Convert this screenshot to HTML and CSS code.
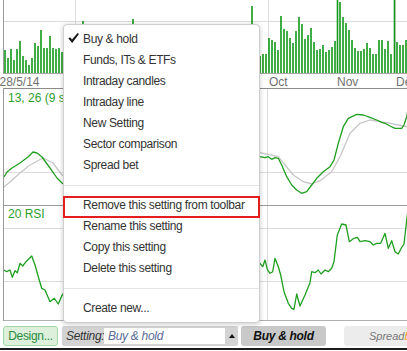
FILE: index.html
```html
<!DOCTYPE html>
<html>
<head>
<meta charset="utf-8">
<title>Chart settings</title>
<link rel="stylesheet" href="styles.css">
</head>
<body>
<div class="app">
  <div class="chart">
    <div class="panel vol">
      <svg class="plot" width="403" height="73" viewBox="4 0 403 73">
        <path class="grid" d="M4 21.5H407M75.5 0V73M268.5 0V73M337.5 0V73M395.5 0V73"/>
        <path class="bars" d="M5 73V50M8 73V58M11 73V49M14 73V60M17 73V49M20 73V41M23 73V56M26 73V60M29 73V65M32 73V58M35 73V43M38 73V46M41 73V30M44 73V48M47 73V48M50 73V36M53 73V48M56 73V49M59 73V48M62 73V52M83 73V21M133 73V19M252 73V6M260 73V56M263 73V54M266 73V54M269 73V38M272 73V40M275 73V42M278 73V50M281 73V16M284 73V29M287 73V31M290 73V38M293 73V43M296 73V31M299 73V17M302 73V24M305 73V39M308 73V35M311 73V28M314 73V42M317 73V50M320 73V49M323 73V45M326 73V52M329 73V50M332 73V47M335 73V41M337.5 73V0M340 73V2M343 73V17M346 73V23M349 73V30M352 73V40M355 73V48M358 73V51M361 73V51M364 73V49M367 73V43M370 73V48M373 73V54M376 73V54M379 73V40M382 73V40M385 73V49M388 73V41M391 73V54M394.5 73V0M397 73V42M400 73V45M403 73V45M406 73V40"/>
      </svg>
    </div>
    <div class="axis">
      <svg width="407" height="14" viewBox="0 74 407 14">
        <text x="-0.5" y="86">28/5/14</text>
        <text x="269" y="86">Oct</text>
        <text x="337" y="86">Nov</text>
        <text x="396" y="86">Dec</text>
      </svg>
    </div>
    <div class="panel macd">
      <span class="label">13, 26 (9 signal)</span>
      <svg class="plot" width="403" height="116" viewBox="4 89 403 116">
        <path class="grid" d="M4 172.5H407M267.5 89V205"/>
        <path class="sig" d="M4 187L10 182L20 173L30 165L43 158L53 163L62 175L70 180L258 152L260 152.7L278.3 156.7L285 165L293.3 175L303.3 181.7L311.7 184L320 180.7L331.7 171.7L340 156.7L350 133.3L360 123.3L370 120L386.7 122.7L403.3 126L408 127"/>
        <path class="line" d="M4 177L7 172L12 168L20 163L28 157L33 152L37 153L42 157L50 168L57 178L62 183L66 186L258 156L260 156.7L265 157.7L268.3 156.7L271.7 159.3L275 157.7L278.3 158.3L281.7 165L286.7 176.7L291.7 185L296.7 190L301.7 193.3L306.7 191.7L311.7 185L316.7 178.3L323.3 171.7L330 166.7L334 160L338.3 143.3L343.3 126.7L348.3 118.3L356.7 114.3L363.3 115L370 117.3L376.7 120L381.7 122.3L385 123.3L390 126L395 128.3L401.7 128.3L404 125L406.7 116.7L408 110"/>
      </svg>
    </div>
    <div class="panel rsi">
      <span class="label">20 RSI</span>
      <svg class="plot" width="403" height="114" viewBox="4 206 403 114">
        <path class="grid" d="M4 228.5H407M4 281.5H407M267.5 206V320"/>
        <path class="line" d="M4 270L6.7 271.7L10 270L12.3 277.3L15 270.7L17.3 272.7L20 263.3L22.7 266L26 261.7L31.7 256L35 265L38.3 276.7L41.7 288.3L45 290L50 301.7L54.3 298.3L58.3 304L61.7 296L66 290L258 262L260 263.3L262.7 266.7L265 260L267.3 269.3L270 273.3L272.7 271.7L275 258.3L278.3 266.7L280.7 275L284 291.7L288.3 303.3L291.7 308.3L294 309.3L296.7 294L300 306L305 295L310 282.7L311.7 271.7L315 272.7L318.3 270L321 274L325 270L328.3 271.7L331.7 268.3L334 261.7L337.3 235L341.7 224L346 225L349.3 241.7L354 238.3L357.3 237.3L360 241.7L365 240.7L370 241.7L373.3 245L376.7 243.3L380.7 243.3L385 233.3L388.3 248.3L391.7 240.7L395 251.7L398.3 254L401.7 247.3L404 244L406.7 220L408 210"/>
      </svg>
    </div>
  </div>

  <div class="toolbar">
    <div class="btn design">Design...</div>
    <div class="setting">
      <span class="setting-label">Setting:</span>
      <span class="setting-input">Buy &amp; hold</span>
      <svg class="caret" width="6" height="4" viewBox="0 0 6 4"><path d="M0 4L3 0L6 4Z"/></svg>
    </div>
    <div class="btn buy">Buy &amp; hold</div>
    <div class="btn spread">Spread <span class="hot">b</span></div>
  </div>
  <div class="base"></div>

  <div class="menu">
    <div class="item"><svg class="check" width="11" height="10" viewBox="0 0 11 10"><path d="M0.3 5.6L2.1 4.2L4 6.4L9.6 0L11 1.1L4.2 10Z"/></svg>Buy &amp; hold</div>
    <div class="item">Funds, ITs &amp; ETFs</div>
    <div class="item">Intraday candles</div>
    <div class="item">Intraday line</div>
    <div class="item">New Setting</div>
    <div class="item">Sector comparison</div>
    <div class="item">Spread bet</div>
    <div class="sep"></div>
    <div class="item marked">Remove this setting from toolbar</div>
    <div class="item">Rename this setting</div>
    <div class="item">Copy this setting</div>
    <div class="item">Delete this setting</div>
    <div class="sep"></div>
    <div class="item">Create new...</div>
  </div>
</div>
</body>
</html>
```

FILE: styles.css
```css
* { box-sizing: border-box; }
html, body { margin: 0; padding: 0; }
body {
  width: 407px;
  height: 351px;
  overflow: hidden;
  background: #fff;
  font-family: "Liberation Sans", Arial, sans-serif;
  font-size: 12px;
  color: #333;
}
.app { position: relative; width: 407px; height: 351px; }

.chart { width: 407px; }
.panel {
  position: relative;
  margin-left: 3px;
  border-left: 1px solid #9a9a9a;
  overflow: hidden;
}
.panel svg, .axis svg { display: block; }
.vol { height: 74px; border-bottom: 1px solid #a8a8a8; }
.axis { height: 14px; }
.axis text { font-family: "Liberation Sans", Arial, sans-serif; font-size: 12px; fill: #707070; }
.macd { height: 118px; border-top: 1px solid #8c8c8c; border-bottom: 1px solid #9a9a9a; }
.rsi { height: 115px; border-bottom: 1px solid #b0b0b0; }

.grid { stroke: #dcdcdc; stroke-width: 1; fill: none; }
.bars { stroke: #12991a; stroke-width: 1.6; fill: none; }
.line { stroke: #1f9f1f; stroke-width: 1.3; fill: none; stroke-linejoin: round; }
.sig { stroke: #c6c6c6; stroke-width: 1.3; fill: none; stroke-linejoin: round; }

.label {
  position: absolute;
  left: 4px;
  top: 2px;
  font-size: 12px;
  line-height: 14px;
  color: #2e9e2e;
  white-space: nowrap;
}
.rsi .label { top: 1px; }

.toolbar {
  display: flex;
  height: 20px;
  margin-top: 5px;
  font-size: 12px;
  letter-spacing: -0.3px;
}
.toolbar > * { flex-shrink: 0; }
.btn {
  display: flex;
  align-items: center;
  justify-content: center;
  border-radius: 3px;
  white-space: nowrap;
}
.design {
  margin-left: 3px;
  width: 55px;
  background: #dcf0dc;
  border: 1px solid #a6d8a6;
  color: #2b8c3e;
}
.setting {
  margin-left: 4px;
  width: 176px;
  display: flex;
  align-items: center;
  padding-left: 4px;
  background: #d3d3d3;
  border-radius: 2px;
  font-style: italic;
  color: #333;
}
.setting-label { width: 38px; flex-shrink: 0; }
.setting-input {
  width: 121px;
  flex-shrink: 0;
  height: 16px;
  line-height: 16px;
  background: #fff;
  padding-left: 4px;
  color: #5a6d98;
}
.caret { margin-left: 4px; fill: #111; flex-shrink: 0; }
.buy {
  margin-left: 3px;
  width: 85px;
  background: #c9c9c9;
  font-weight: bold;
  font-style: italic;
  color: #111;
}
.toolbar > .spread {
  margin-left: 18px;
  flex: 1 1 0;
  min-width: 0;
  overflow: hidden;
  justify-content: flex-start;
  padding-left: 25px;
  background: #ececec;
  font-size: 11px;
  letter-spacing: 0;
  font-style: italic;
  color: #777;
  border-radius: 3px 0 0 3px;
}
.hot { color: #f0a020; margin-left: 0; }
.base { margin-top: 2px; height: 2px; background: #1c1c1c; }

.menu {
  position: absolute;
  left: 63px;
  top: 24px;
  width: 197px;
  height: 299px;
  padding: 4px 0 3px;
  background: #fff;
  border: 1px solid #cfcfcf;
  border-radius: 4px;
  box-shadow: 0 1px 5px rgba(0, 0, 0, 0.22);
}
.item {
  position: relative;
  height: 21px;
  line-height: 21px;
  padding-left: 19px;
  white-space: nowrap;
  color: #333;
  letter-spacing: -0.35px;
}
.check {
  display: inline-block;
  margin-left: -15px;
  margin-right: 4px;
  fill: #1a1a1a;
}
.sep { height: 1px; margin: 9px 0; background: #e4e4e4; }
.marked::after {
  content: "";
  position: absolute;
  left: -1px;
  right: -1px;
  top: 1px;
  height: 18px;
  border: 2px solid #e41e1e;
}
```
